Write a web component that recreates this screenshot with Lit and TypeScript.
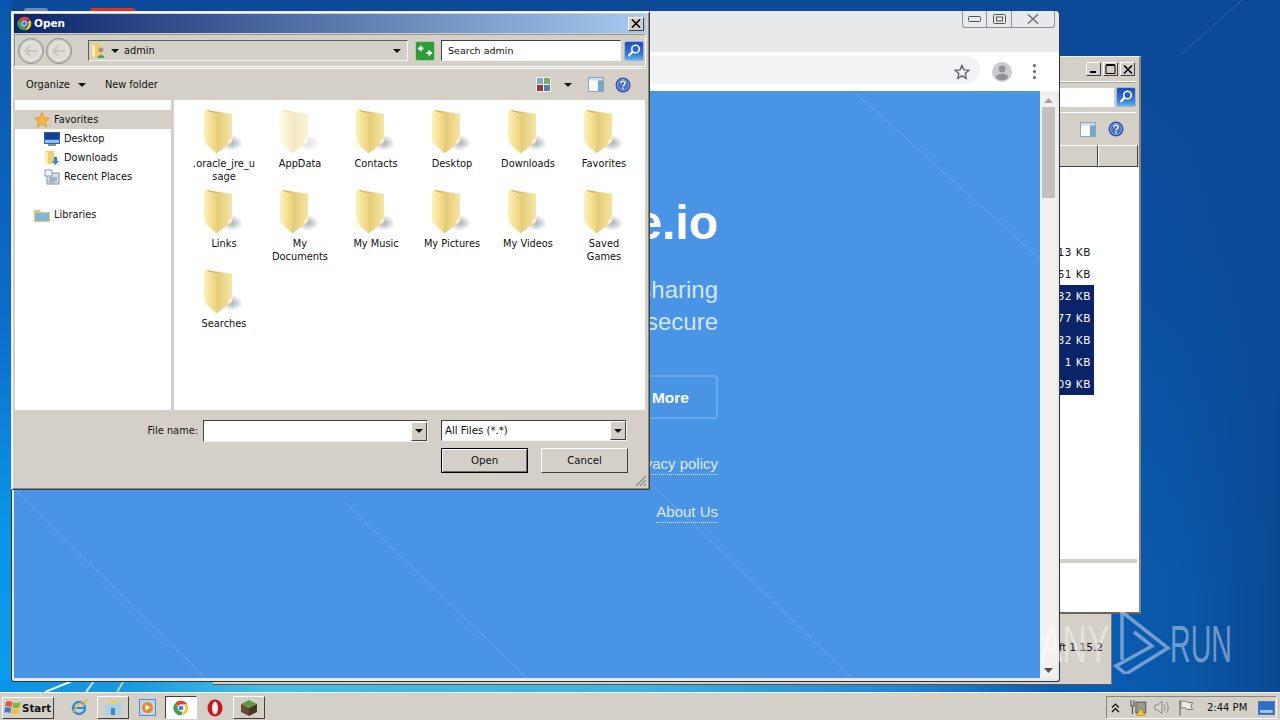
import { LitElement, html, css } from 'lit'
import { customElement } from 'lit/decorators.js'

const folders = [
  { name: '.oracle_jre_usage', wrap: true },
  { name: 'AppData', faded: true },
  { name: 'Contacts' },
  { name: 'Desktop' },
  { name: 'Downloads' },
  { name: 'Favorites' },
  { name: 'Links' },
  { name: 'My Documents' },
  { name: 'My Music' },
  { name: 'My Pictures' },
  { name: 'My Videos' },
  { name: 'Saved Games' },
  { name: 'Searches' },
]

const sizes = [
  { t: '113 KB' },
  { t: '261 KB' },
  { t: '682 KB', sel: true },
  { t: '077 KB', sel: true },
  { t: '882 KB', sel: true },
  { t: '1 KB', sel: true },
  { t: '109 KB', sel: true },
]

const folderIcon = (faded = false) => html`
  <svg class="folder ${faded ? 'faded' : ''}" width="40" height="46" viewBox="0 0 40 46">
    <defs>
      <linearGradient id="fb" x1="0" x2="1" y1="0" y2="0">
        <stop offset="0" stop-color="#c7a957" /><stop offset=".5" stop-color="#e6cf7e" /><stop offset="1" stop-color="#f5e5a0" />
      </linearGradient>
      <linearGradient id="fl" x1="0" x2="1" y1="0" y2="0">
        <stop offset="0" stop-color="#fdf2b8" /><stop offset="1" stop-color="#ecd27a" />
      </linearGradient>
      <radialGradient id="fs"><stop offset="0" stop-color="#8b95a3" stop-opacity=".75" /><stop offset="1" stop-color="#8b95a3" stop-opacity="0" /></radialGradient>
    </defs>
    <ellipse cx="28" cy="33" rx="11" ry="8" fill="url(#fs)" />
    <path d="M3 0 L28 4 L28 32 L13 43 Z" fill="url(#fb)" />
    <path d="M24 31 l3 -5 l1 6 l-4 2z" fill="#fbf3c8" />
    <path d="M0 0 L13 4 L13 44 L2 34 L0 30 Z" fill="url(#fl)" />
  </svg>
`

const chromeIcon = (s: number) => html`
  <svg width=${s} height=${s} viewBox="0 0 20 20">
    <path d="M10 1a9 9 0 0 1 7.800 4.500H10a4.500 4.500 0 0 0-4.200 2.900L3 3.900A9 9 0 0 1 10 1z" fill="#e2452f" />
    <path d="M17.800 5.500A9 9 0 0 1 10.600 19l3.300-5.200A4.500 4.500 0 0 0 14 7.500z" fill="#f7c52c" />
    <path d="M10.600 19A9 9 0 0 1 3 3.900l3.800 6.900A4.500 4.500 0 0 0 12 14.400z" fill="#3ea04f" />
    <circle cx="10" cy="10" r="3.600" fill="#3f7fe0" stroke="#fff" stroke-width="1.200" />
  </svg>
`

const helpIcon = () => html`
  <svg width="16" height="16" viewBox="0 0 16 16">
    <circle cx="8" cy="8" r="7.500" fill="#2d4fa8" />
    <circle cx="8" cy="8" r="5.600" fill="#4d6fc4" stroke="#a9b9e2" stroke-width=".8" />
    <path d="M5.900 6.200a2.100 2 0 1 1 3.300 1.600c-.8.600-1.200.9-1.200 1.800" fill="none" stroke="#fff" stroke-width="1.400" />
    <rect x="7.200" y="10.600" width="1.600" height="1.600" fill="#fff" />
  </svg>
`

const paneIcon = () => html`
  <svg width="16" height="15" viewBox="0 0 16 15">
    <rect x=".5" y=".5" width="15" height="14" fill="#f8fbfd" stroke="#8ea6b8" />
    <rect x="10" y="1" width="5" height="13" fill="#72a9c9" />
    <rect x="1" y="1" width="14" height="2.500" fill="#cfdde8" />
  </svg>
`

const viewsIcon = () => html`
  <svg width="15" height="15" viewBox="0 0 15 15">
    <rect width="15" height="15" fill="#f3f1ec" />
    <rect x="1" y="1" width="6" height="6" fill="#8aa6c8" /><rect x="8" y="1" width="6" height="6" fill="#7fa868" />
    <rect x="1" y="8" width="6" height="6" fill="#8c3f38" /><rect x="8" y="8" width="6" height="6" fill="#5a7cab" />
  </svg>
`

const searchBtn = () => html`
  <svg width="20" height="20" viewBox="0 0 20 20">
    <defs>
      <linearGradient id="sb" x1="0" x2="0" y1="0" y2="1">
        <stop offset="0" stop-color="#1c48b8" /><stop offset=".7" stop-color="#3b7ed8" /><stop offset="1" stop-color="#5cc0e6" />
      </linearGradient>
    </defs>
    <rect x=".5" y=".5" width="19" height="19" rx="2" fill="url(#sb)" stroke="#9fb4d8" />
    <circle cx="11.500" cy="8" r="3.800" fill="#2c62c4" stroke="#fff" stroke-width="1.600" />
    <path d="M8.600 10.800 L4.500 15" stroke="#fff" stroke-width="2.200" />
  </svg>
`

@customElement('app-root')
export class AppRoot extends LitElement {
  static styles = css`
    :host {
      display: block;
      width: 1280px;
      height: 720px;
      overflow: hidden;
      position: relative;
      font-family: Tahoma, 'DejaVu Sans', sans-serif;
      font-size: 9.8px;
      color: #111;
    }

    .desktop {
      position: absolute;
      inset: 0 0 28px 0;
      overflow: hidden;
      background: linear-gradient(90deg, #0d63bd 0%, #0a5cb4 85%, #0a57a8 92%, #0a4a94 100%), #0a57ad;
    }
    .desk-top {
      position: absolute;
      inset: 0;
      background: linear-gradient(180deg, #0b4a98 0%, rgba(11,74,152,.75) 35%, rgba(11,74,152,0) 85%);
    }
    .left-strip {
      position: absolute;
      left: 0; top: 0; bottom: 0;
      width: 12px;
      background: linear-gradient(180deg, #0b56ac 0%, #0b6cc8 45%, #0a94e6 75%, #0a9cec 100%);
    }
    .low-strip {
      position: absolute;
      left: 0; bottom: 0;
      width: 1060px; height: 11px;
      background: linear-gradient(90deg, #0a94e6 0%, #1a98e0 12%, #40c0e4 25%, #3cb4e2 60%, #1f86d4 85%, #0a5cb4 100%);
    }
    .low-strip i { position: absolute; display: block; height: 1.500px; transform-origin: left; }
    .streak {
      position: absolute;
      left: 1180px;
      top: 55px;
      width: 130px;
      height: 1px;
      background: rgba(255,255,255,.12);
      transform: rotate(-42deg);
      transform-origin: left;
    }
    .peek-red, .peek-gray { position: absolute; top: 8px; height: 4px; border-radius: 3px 3px 0 0; }
    .peek-red { left: 90px; width: 45px; background: #d8322a; }
    .peek-gray { left: 24px; width: 24px; background: #6d8db5; }

    .win { position: absolute; box-sizing: border-box; }

    /* back window with the truncated file list */
    .back-low {
      left: 213px; top: 600px; width: 899px; height: 85px;
      background: #d4d0c8;
      border-bottom: 1px solid #555;
      border-right: 1px solid #777;
    }
    .version {
      position: absolute;
      right: 8px;
      top: 41px;
      font-size: 10.500px;
    }
    .back {
      left: 1000px; top: 56px; width: 141px; height: 558px;
      background: #d4d0c8;
      border-top: 1px solid #f2f0ec;
      border-right: 2px solid #8a8478;
      border-bottom: 2px solid #6c675e;
      padding: 3px 0 0 0;
      display: flex;
      flex-direction: column;
    }
    .back-title { height: 19px; display: flex; justify-content: flex-end; gap: 2px; padding: 2px 4px 0 0; }
    .cap {
      width: 15px; height: 14px;
      box-sizing: border-box;
      background: #d4d0c8;
      border: 1px solid;
      border-color: #fff #404040 #404040 #fff;
      display: flex; align-items: center; justify-content: center;
    }
    .back-addr {
      height: 32px;
      flex: 0 0 auto;
      box-sizing: border-box;
      border-top: 1px solid #fff;
      border-bottom: 1px solid #fff;
      box-shadow: inset 0 1px 0 #a9a59c;
      margin-right: 3px;
      display: flex;
      justify-content: flex-end;
      align-items: center;
      gap: 2px;
      padding-right: 0;
    }
    .back-search { width: 114px; height: 19px; background: #fff; }
    .back-cmd {
      height: 32px;
      flex: 0 0 auto;
      display: flex; justify-content: flex-end; align-items: center;
      gap: 12px; padding-right: 15px;
    }
    .back-head { height: 22px; flex: 0 0 auto; display: flex; justify-content: flex-end; padding-right: 1px; }
    .back-head i { display: block; box-sizing: border-box; height: 22px; background: #d4d0c8; border: 1px solid; border-color: #fff #404040 #404040 #fff; }
    .back-list {
      flex: 1;
      background: #fff;
      display: flex;
      flex-direction: column;
    }
    .sizes { height: 392px; padding-top: 74px; box-sizing: border-box; }
    .size {
      width: 94px; height: 22px; line-height: 22px;
      box-sizing: border-box;
      padding-right: 3px;
      text-align: right;
      font-size: 10.500px;
      letter-spacing: .55px;
      color: #111;
    }
    .size.sel { background: #0a246a; color: #fff; }
    .back-rule { height: 4px; background: #d4d0c8; margin-right: 2px; }

    /* browser */
    .browser {
      left: 11px; top: 11px; width: 1049px; height: 671px;
      background: #e7e9eb;
      border-left: 1px solid #333;
      border-right: 1px solid #333;
      border-bottom: 1px solid #333;
      border-radius: 4px 4px 3px 3px;
      display: flex;
      flex-direction: column;
      padding: 0 2px 3px 2px;
    }
    .tabs { height: 41px; position: relative; margin: 0 -2px; }
    .caps {
      position: absolute;
      right: 4px; top: 0;
      height: 16px;
      display: flex;
      border: 1px solid #8f9397;
      border-top: none;
      border-radius: 0 0 3px 3px;
    }
    .caps span { display: flex; align-items: center; justify-content: center; border-right: 1px solid #8f9397; height: 16px; }
    .caps span:last-child { border-right: none; }
    .omni {
      height: 39px;
      background: #fff;
      display: flex;
      align-items: center;
      justify-content: flex-end;
      margin: 0 -2px;
      padding-right: 23px;
    }
    .omni-fill { flex: 1; height: 28px; background: #f1f3f4; margin: 0 0 3px 40px; }
    .star-wrap {
      width: 36px; height: 28px;
      display: flex; align-items: center; justify-content: center;
      background: #f1f3f4;
      border-radius: 0 14px 14px 0;
      margin: 0 12px 3px 0;
      flex: 0 0 auto;
    }
    .star-wrap svg { margin-top: 3px; }
    .avatar { margin-right: 21px; display: flex; }
    .dots { display: flex; flex-direction: column; gap: 3px; width: 3px; }
    .dots i { display: block; width: 3px; height: 3px; background: #5f6368; border-radius: 50%; }
    .viewport { flex: 1; display: flex; min-height: 0; }
    .page {
      flex: 1;
      position: relative;
      overflow: hidden;
      background: #4a94e6;
      color: #fff;
      font-family: 'Liberation Sans', Arial, sans-serif;
      display: flex;
      flex-direction: column;
      align-items: flex-end;
      padding-right: 322px;
    }
    .pline {
      position: absolute;
      height: 1px;
      background: rgba(255,255,255,.13);
      transform-origin: left;
    }
    .brand { font-size: 48px; font-weight: 700; line-height: 56px; margin-top: 104px; }
    .tag { font-size: 24px; line-height: 32px; color: #d3e6fa; margin-top: 23px; }
    .tag + .tag { margin-top: 0; }
    .more {
      margin-top: 37px;
      width: 160px; height: 44px;
      box-sizing: border-box;
      border: 2px solid #6aa8ec;
      border-radius: 4px;
      display: flex; align-items: center; justify-content: flex-end;
      padding: 2px 27px 0 0;
      font-size: 15.500px; font-weight: 700;
    }
    .link {
      font-size: 15px;
      line-height: 20px;
      color: #dcebfb;
      border-bottom: 1px dotted #cfe3fa;
    }
    .l1 { margin-top: 35px; }
    .l2 { margin-top: 27px; }
    .sbar {
      width: 17px;
      background: #f1f1f1;
      display: flex;
      flex-direction: column;
      align-items: center;
      justify-content: space-between;
      position: relative;
      padding: 7px 0 5px;
      box-sizing: border-box;
    }
    .thumb { position: absolute; left: 2px; right: 2px; top: 16px; height: 91px; background: #c1c1c1; }

    /* open dialog */
    .dlg {
      left: 11px; top: 11px; width: 639px; height: 479px;
      background: #d4d0c8;
      border: 1px solid;
      border-color: #e9e7e2 #404040 #404040 #e9e7e2;
      box-shadow: inset 1px 1px 0 #fff, inset -1px -1px 0 #8a8680;
      padding: 2px 3px 3px 2px;
      display: flex;
      flex-direction: column;
    }
    .title {
      height: 19px;
      flex: 0 0 auto;
      background: linear-gradient(90deg, #0a246a, #a6caf0);
      display: flex;
      align-items: center;
      gap: 2px;
      padding: 0 2px 1px 3px;
      box-sizing: border-box;
      color: #fff;
      font-weight: 700;
      font-size: 10.500px;
    }
    .title span { flex: 1; }
    .title svg { flex: 0 0 auto; }
    .title .cap { width: 16px; height: 14px; margin-top: 1px; }

    .addr {
      height: 33px;
      flex: 0 0 auto;
      margin: 1px 0 1px 0;
      box-sizing: border-box;
      border: 1px solid #9c988f;
      border-right-color: #fff; border-bottom-color: #fff;
      display: flex;
      align-items: center;
      padding: 0 1px 0 3px;
      gap: 6px;
    }
    .navs { display: flex; gap: 2px; margin-right: 10px; }
    .addr-box {
      width: 320px; height: 21px;
      box-sizing: border-box;
      border: 1px solid #5f5c55;
      border-right-color: #f5f4f0; border-bottom-color: #f5f4f0;
      display: flex; align-items: center;
      padding: 0 6px 0 2px;
      gap: 5px;
      flex: 0 0 auto;
    }
    .addr-box b { font-weight: 400; flex: 1; }
    .tri { width: 0; height: 0; border: 4px solid transparent; border-top: 4px solid #111; border-bottom: none; flex: 0 0 auto; }
    .go { flex: 0 0 auto; margin-left: 1px; }
    .search {
      width: 180px; height: 21px;
      box-sizing: border-box;
      border: 1px solid;
      border-color: #404040 #f5f4f0 #f5f4f0 #404040;
      background: #fff;
      padding: 0 6px;
      line-height: 19px;
      font-size: 9.500px;
      flex: 0 0 auto;
    }
    .sb { display: flex; margin-left: -3px; }

    .cmd {
      height: 32px;
      flex: 0 0 auto;
      display: flex;
      align-items: center;
      padding: 0 15px 0 12px;
      border-top: 1px solid #fff;
      box-sizing: border-box;
    }
    .org { margin-right: 8px; }
    .newf { margin-left: 19px; flex: 1; }
    .cmd .v { margin-right: 13px; display: flex; }
    .cmd .tri { margin-right: 16px; }
    .cmd .p { margin-right: 11px; display: flex; }

    .mid { flex: 1; display: flex; min-height: 0; margin: 0 1px 0 1px; }
    .nav {
      width: 156px;
      flex: 0 0 auto;
      background: #fff;
      padding-top: 10px;
      box-sizing: border-box;
      margin-right: 3px;
    }
    .ni { height: 19px; display: flex; align-items: center; gap: 4px; padding-left: 49px; }
    .ni svg { margin-left: -20px; }
    .ni.top { padding-left: 39px; background: #d4d0c8; }
    .ni.lib { margin-top: 19px; background: none; }
    .files {
      flex: 1;
      background: #fff;
      display: grid;
      grid-template-columns: repeat(6, 76px);
      grid-auto-rows: 80px;
      align-content: start;
      padding: 8px 0 0 12px;
    }
    .file { display: flex; flex-direction: column; align-items: center; text-align: center; line-height: 13px; }
    .file .ic { height: 46px; width: 100%; box-sizing: border-box; display: flex; justify-content: center; align-items: flex-start; margin-top: 2px; }
    .file .nm { width: 64px; margin-top: 1px; }
    .file .nm.brk { word-break: break-all; }
    .folder.faded { opacity: .42; }

    .bottom {
      height: 76px;
      flex: 0 0 auto;
      display: grid;
      grid-template-columns: 189px 225px 200px;
      align-content: start;
      padding-top: 10px;
      box-sizing: border-box;
      position: relative;
    }
    .lbl { text-align: right; padding-right: 5px; line-height: 21px; }
    .combo {
      height: 22px;
      box-sizing: border-box;
      background: #fff;
      border: 1px solid;
      border-color: #404040 #f5f4f0 #f5f4f0 #404040;
      display: flex;
      justify-content: space-between;
      align-items: center;
      padding-left: 3px;
      line-height: 20px;
    }
    .combo.f { margin: 0 1px 0 13px; height: 21px; font-size: 10.200px; }
    .drop {
      width: 16px; height: 19px;
      box-sizing: border-box;
      background: #d4d0c8;
      border: 1px solid;
      border-color: #fff #404040 #404040 #fff;
      display: flex; align-items: center; justify-content: center;
    }
    .actions {
      grid-column: 3;
      margin-left: 13px;
      display: flex;
      gap: 13px;
      margin-top: 6px;
    }
    .btn {
      width: 87px; height: 25px;
      box-sizing: border-box;
      display: flex; align-items: center; justify-content: center;
      background: #d4d0c8;
      border: 1px solid;
      border-color: #fff #404040 #404040 #fff;
      font-size: 10.200px;
    }
    .btn.def { outline: 1px solid #000; outline-offset: -1px; box-shadow: inset 1px 1px 0 #fff, inset -1px -1px 0 #6d6a63; }
    .grip { position: absolute; right: 0; bottom: 0; display: flex; }

    /* watermark */
    .mark { position: absolute; left: 1040px; top: 608px; width: 200px; height: 70px; color: rgba(255,255,255,.42); font-family: 'Liberation Sans', Arial, sans-serif; pointer-events: none; }
    .mark span { position: absolute; font-size: 52px; line-height: 52px; top: 10px; transform-origin: left; }
    .mark .a { left: 0; transform: scaleX(.65); }
    .mark .r { left: 130px; transform: scaleX(.55); }
    .mark svg { position: absolute; left: 72px; top: 0; }

    /* taskbar */
    .taskbar {
      position: absolute;
      left: 0; right: 0; bottom: 0;
      height: 28px;
      box-sizing: border-box;
      background: #d4d0c8;
      border-top: 1px solid #fff;
      display: flex;
      align-items: center;
      padding: 2px 3px 0 2px;
    }
    .start {
      width: 52px; height: 22px;
      box-sizing: border-box;
      border: 1px solid;
      border-color: #fff #404040 #404040 #fff;
      display: flex; align-items: center; gap: 0;
      padding-left: 1px;
      font-weight: 700;
      font-size: 10.300px;
      margin-right: 9px;
    }
    .tb {
      width: 32px; height: 23px;
      box-sizing: border-box;
      display: flex; align-items: center; justify-content: center;
      margin-right: 2px;
      border: 1px solid transparent;
    }
    .tb.up { border-color: #fff #404040 #404040 #fff; }
    .tb.down { background: #fff; border-color: #404040 #fff #fff #404040; }
    .spacer { flex: 1; }
    .tray {
      width: 171px; height: 23px;
      box-sizing: border-box;
      border: 1px solid;
      border-color: #8a8680 #fff #fff #8a8680;
      display: flex; align-items: center;
      padding: 0 1px 0 4px;
    }
    .time { font-size: 10px; margin: 0 11px 0 0; white-space: nowrap; }
    .tr1 { margin-right: 10px; }
    .tr2 { margin-right: 7px; }
    .tr3 { margin-right: 9px; }
    .tr4 { margin-right: 13px; }
  `

  private _back() {
    return html`
      <div class="win back-low"><div class="version">ft 1.15.2</div></div>
      <div class="win back">
        <div class="back-title">
          <div class="cap"><svg width="9" height="9" viewBox="0 0 9 9"><rect x="1" y="6" width="6" height="2" fill="#000" /></svg></div>
          <div class="cap"><svg width="11" height="10" viewBox="0 0 11 10"><path d="M1 1.500h9v8h-9z" fill="none" stroke="#000" stroke-width="1" /><rect x="1" y="0" width="9" height="2" /></svg></div>
          <div class="cap"><svg width="10" height="9" viewBox="0 0 10 9"><path d="M1 0.500l8 8M9 0.500l-8 8" stroke="#000" stroke-width="1.600" /></svg></div>
        </div>
        <div class="back-addr"><div class="back-search"></div><div style="display:flex">${searchBtn()}</div></div>
        <div class="back-cmd">${paneIcon()}${helpIcon()}</div>
        <div class="back-head"><i style="width:97px"></i><i style="width:40px"></i></div>
        <div class="back-list">
          <div class="sizes">
            ${sizes.map((s) => html`<div class="size ${s.sel ? 'sel' : ''}">${s.t}</div>`)}
          </div>
          <div class="back-rule"></div>
        </div>
      </div>
    `
  }

  private _browser() {
    return html`
      <div class="win browser">
        <div class="tabs">
          <div class="caps">
            <span style="width:23px"><svg width="13" height="6" viewBox="0 0 13 6"><rect x=".5" y=".5" width="12" height="5" rx="1" fill="none" stroke="#555" /></svg></span>
            <span style="width:24px"><svg width="13" height="10" viewBox="0 0 13 10"><rect x=".5" y=".5" width="12" height="9" rx="1" fill="none" stroke="#555" /><rect x="3.500" y="3" width="6" height="4" fill="none" stroke="#555" /></svg></span>
            <span style="width:42px"><svg width="12" height="10" viewBox="0 0 12 10"><path d="M1 .5l10 9M11 .5l-10 9" stroke="#777" stroke-width="1.600" /></svg></span>
          </div>
        </div>
        <div class="omni">
          <div class="omni-fill"></div>
          <div class="star-wrap"><svg width="16" height="16" viewBox="0 0 16 16"><path d="M8 1.500l2 4.400 4.800.5-3.600 3.200 1 4.700L8 11.900l-4.200 2.400 1-4.700L1.200 6.400 6 5.900z" fill="none" stroke="#5f6368" stroke-width="1.400" /></svg></div>
          <div class="avatar">
            <svg width="20" height="20" viewBox="0 0 20 20"><circle cx="10" cy="10" r="10" fill="#c9cbcd" /><circle cx="10" cy="7" r="3.400" fill="#8f9194" /><ellipse cx="10" cy="15" rx="6" ry="3.200" fill="#8f9194" /></svg>
          </div>
          <div class="dots"><i></i><i></i><i></i></div>
        </div>
        <div class="viewport">
          <div class="page">
            <div class="pline" style="left:840px;top:0;width:260px;transform:rotate(42deg)"></div>
            <div class="pline" style="left:2px;top:399px;width:268px;transform:rotate(44.700deg)"></div>
            <div class="pline" style="left:330px;top:410px;width:260px;transform:rotate(44deg)"></div>
            <div class="pline" style="left:640px;top:395px;width:280px;transform:rotate(44deg)"></div>
            <div class="brand">e.io</div>
            <div class="tag">sharing</div>
            <div class="tag">secure</div>
            <div class="more">More</div>
            <div class="link l1">Privacy policy</div>
            <div class="link l2">About Us</div>
          </div>
          <div class="sbar">
            <div class="thumb"></div>
            <svg width="9" height="5" viewBox="0 0 9 5" style="position:relative"><path d="M4.500 0L9 5H0z" fill="#a3a3a3" /></svg>
            <svg width="9" height="5" viewBox="0 0 9 5"><path d="M0 0h9L4.500 5z" fill="#505050" /></svg>
          </div>
        </div>
      </div>
    `
  }

  private _dialog() {
    return html`
      <div class="win dlg">
        <div class="title">
          ${chromeIcon(15)}<span>Open</span>
          <div class="cap"><svg width="10" height="9" viewBox="0 0 10 9"><path d="M1 0.500l8 8M9 0.500l-8 8" stroke="#000" stroke-width="1.600" /></svg></div>
        </div>
        <div class="addr">
          <div class="navs">
            ${[0, 1].map(() => html`
              <svg width="26" height="26" viewBox="0 0 26 26">
                <circle cx="13" cy="13" r="12.500" fill="#cdcac3" stroke="#8f8c85" />
                <circle cx="13" cy="13" r="9.500" fill="#dedcd6" stroke="#f2f1ed" />
                <path d="M6.500 13h13M12 8.500l-5 4.500 5 4.500" fill="none" stroke="#c8c5bd" stroke-width="2" />
              </svg>
            `)}
          </div>
          <div class="addr-box">
            <svg width="15" height="16" viewBox="0 0 15 16"><path d="M1 1h9l1 3v11H4l-3-2z" fill="#e8cf73" /><path d="M1 1l3 2v12l-3-2z" fill="#fbeeaa" /><circle cx="10" cy="7" r="2.400" fill="#b58d6a" /><path d="M6.500 15c0-4 7-4 7 0z" fill="#4d9a70" /></svg>
            <i class="tri"></i>
            <b>admin</b>
            <i class="tri"></i>
          </div>
          <svg class="go" width="20" height="20" viewBox="0 0 20 20">
            <rect x=".5" y=".5" width="19" height="19" rx="1.500" fill="#2d9c3a" stroke="#a8c8a8" />
            <path d="M2.500 7.500l4-3.500v2.500h2v2h-2V11zM17.500 12l-4-3.500V11h-2v2h2v2.500z" fill="#fff" />
          </svg>
          <div class="search">Search admin</div>
          <div class="sb">${searchBtn()}</div>
        </div>
        <div class="cmd">
          <span class="org">Organize</span><i class="tri" style="margin-right:0"></i>
          <span class="newf">New folder</span>
          <div class="v">${viewsIcon()}</div>
          <i class="tri"></i>
          <div class="p">${paneIcon()}</div>
          ${helpIcon()}
        </div>
        <div class="mid">
          <div class="nav">
            <div class="ni top">
              <svg width="16" height="16" viewBox="0 0 16 16"><path d="M8 .5l2.300 5 5.200.6-3.900 3.500 1.100 5.300L8 12.200l-4.700 2.700 1.100-5.300L.5 6.100l5.200-.6z" fill="#f3b53a" stroke="#d98a2a" stroke-width=".6" /></svg>
              Favorites
            </div>
            <div class="ni">
              <svg width="16" height="14" viewBox="0 0 16 14"><rect width="16" height="12" fill="#2a62b4" /><rect x="1" y="1" width="14" height="6" fill="#1a3f8c" /><rect x="1" y="8" width="14" height="3" fill="#8fc0e8" /><rect x="4" y="12" width="8" height="2" fill="#8892a0" /></svg>
              Desktop
            </div>
            <div class="ni">
              <svg width="16" height="16" viewBox="0 0 16 16"><path d="M1 1h9v13H4l-3-2z" fill="#e8cf73" /><path d="M1 1l3 2v12l-3-2z" fill="#fbeeaa" /><path d="M10 7h3v4h2l-3.500 4L8 11h2z" fill="#2f7fd8" /></svg>
              Downloads
            </div>
            <div class="ni">
              <svg width="16" height="16" viewBox="0 0 16 16"><rect x="3" y="4" width="12" height="11" fill="#d7e1ea" stroke="#7f93a6" /><rect x="1" y="1" width="7" height="6" fill="#eef3f7" stroke="#8a9cae" /><path d="M5 9h8M5 11h8M5 13h6" stroke="#6f8aa5" /></svg>
              Recent Places
            </div>
            <div class="ni top lib">
              <svg width="16" height="14" viewBox="0 0 16 14"><path d="M0 2h6l1 2h9v10H0z" fill="#e5c869" /><rect x="1" y="5" width="14" height="8" fill="#7fb6dc" /></svg>
              Libraries
            </div>
          </div>
          <div class="files">
            ${folders.map((f) => html`
              <div class="file">
                <div class="ic">${folderIcon(f.faded)}</div>
                <div class="nm ${f.wrap ? 'brk' : ''}">${f.name}</div>
              </div>
            `)}
          </div>
        </div>
        <div class="bottom">
          <div class="lbl">File name:</div>
          <div class="combo"><span></span><div class="drop"><i class="tri"></i></div></div>
          <div class="combo f"><span>All Files (*.*)</span><div class="drop"><i class="tri"></i></div></div>
          <div class="actions">
            <div class="btn def">Open</div>
            <div class="btn">Cancel</div>
          </div>
          <div class="grip">
            <svg width="11" height="11" viewBox="0 0 11 11"><path d="M11 1L1 11M11 5l-6 6M11 9l-2 2" stroke="#8a8680" stroke-width="1.200" /></svg>
          </div>
        </div>
      </div>
    `
  }

  private _taskbar() {
    return html`
      <div class="taskbar">
        <div class="start">
          <svg width="18" height="17" viewBox="0 0 18 17">
            <path d="M2 3c3-2 4 0 6.500 0L7.500 8C5 8 4 6 1 8z" fill="#e2572c" />
            <path d="M9.500 3.500c2 .6 4 1 7-.5l-1 5c-3 1.500-5 1-7 .5z" fill="#7fb73a" />
            <path d="M1 9c3-2 4 0 6.300 0l-1 5C4 14 3 12 0 14z" fill="#2f7fd8" />
            <path d="M8.300 9.500c2 .6 4 1 7-.5l-1 5c-3 1.500-5 1-7 .5z" fill="#f2c02e" />
          </svg>
          Start
        </div>
        <div class="tb">
          <svg width="18" height="18" viewBox="0 0 18 18"><circle cx="9" cy="9" r="6" fill="none" stroke="#2f8ad8" stroke-width="2.400" /><path d="M4 9h10" stroke="#2f8ad8" stroke-width="2" /><path d="M2 15C5 9 11 3 17 1c-1 3-3 5-5 6" fill="none" stroke="#eebb40" stroke-width="1.200" /></svg>
        </div>
        <div class="tb up">
          <svg width="18" height="17" viewBox="0 0 18 17"><rect x="1" y="3" width="16" height="13" fill="#a9d2e8" /><path d="M1 3h6l1-2h6v4H1z" fill="#e8cf73" /><rect x="7" y="9" width="4" height="7" fill="#3f8ac0" /></svg>
        </div>
        <div class="tb">
          <svg width="17" height="17" viewBox="0 0 17 17"><rect x=".5" y=".5" width="16" height="16" fill="#bcd6ee" stroke="#4d8ed0" /><circle cx="8.500" cy="8.500" r="5.500" fill="#ec8a1e" /><path d="M6.500 5.500l5 3-5 3z" fill="#fff" /></svg>
        </div>
        <div class="tb down">${chromeIcon(16)}</div>
        <div class="tb">
          <svg width="16" height="18" viewBox="0 0 16 18"><ellipse cx="8" cy="9" rx="7.500" ry="8.500" fill="#c8161d" /><ellipse cx="8" cy="9" rx="3" ry="6.500" fill="#fbeeee" /></svg>
        </div>
        <div class="tb up">
          <svg width="18" height="18" viewBox="0 0 18 18"><path d="M9 1l8 4-8 4-8-4z" fill="#5e9b3c" /><path d="M1 5l8 4v8l-8-4z" fill="#6b4a2f" /><path d="M17 5l-8 4v8l8-4z" fill="#4a3422" /></svg>
        </div>
        <div class="spacer"></div>
        <div class="tray">
          <svg class="tr1" width="9" height="10" viewBox="0 0 9 10"><path d="M1 4.500L4.500 1 8 4.500M1 9l3.500-3.500L8 9" fill="none" stroke="#111" stroke-width="1.300" /></svg>
          <svg class="tr2" width="17" height="17" viewBox="0 0 17 17"><rect x="6" y="3" width="10" height="11" fill="#9b9a90" stroke="#555" /><path d="M1 1v6h3V1M2.500 7v8" fill="none" stroke="#555" stroke-width="1.200" /><path d="M11 9l4.500 7.500h-9z" fill="#f2c72e" stroke="#8a6d10" stroke-width=".5" /></svg>
          <svg class="tr3" width="16" height="15" viewBox="0 0 16 15"><path d="M1 5h3l4-4v13l-4-4H1z" fill="#d8d6d0" stroke="#8a8680" /><path d="M10 4c1.500 2 1.500 5 0 7M12.500 2c2.500 3 2.500 8 0 11" fill="none" stroke="#8a8680" /></svg>
          <svg class="tr4" width="16" height="16" viewBox="0 0 16 16"><path d="M2 0v16" stroke="#777" stroke-width="1.400" /><path d="M3 1h6l1 1.500h5L13 6l2 3.500H9L8 8H3z" fill="#eceae4" stroke="#777" /></svg>
          <span class="time">2:44 PM</span>
          <svg width="17" height="14" viewBox="0 0 17 14"><rect width="17" height="14" fill="#2a6fc2" stroke="#6d7f96" /><rect x="2" y="9" width="13" height="3" fill="#9cc4e8" /></svg>
        </div>
      </div>
    `
  }

  render() {
    return html`
      <div class="desktop">
        <div class="desk-top"></div>
        <div class="left-strip"></div>
        <div class="low-strip">
          <i style="left:45px;top:10px;width:28px;background:#e8f6fb;transform:rotate(-22deg)"></i>
          <i style="left:86px;top:10px;width:14px;background:#bfe6f4;transform:rotate(-55deg)"></i>
          <i style="left:117px;top:10px;width:14px;background:#a8e0a0;transform:rotate(-60deg)"></i>
        </div>
        <div class="streak"></div>
        <div class="peek-red"></div>
        <div class="peek-gray"></div>
        ${this._back()}
        ${this._browser()}
        ${this._dialog()}
        <div class="mark">
          <span class="a">ANY</span>
          <svg width="64" height="66" viewBox="0 0 64 66"><path d="M10 4v48M10 4l46 36-42 26-10-8 36-20-18-14" fill="none" stroke="currentColor" stroke-width="3.500" /></svg>
          <span class="r">RUN</span>
        </div>
      </div>
      ${this._taskbar()}
    `
  }
}
